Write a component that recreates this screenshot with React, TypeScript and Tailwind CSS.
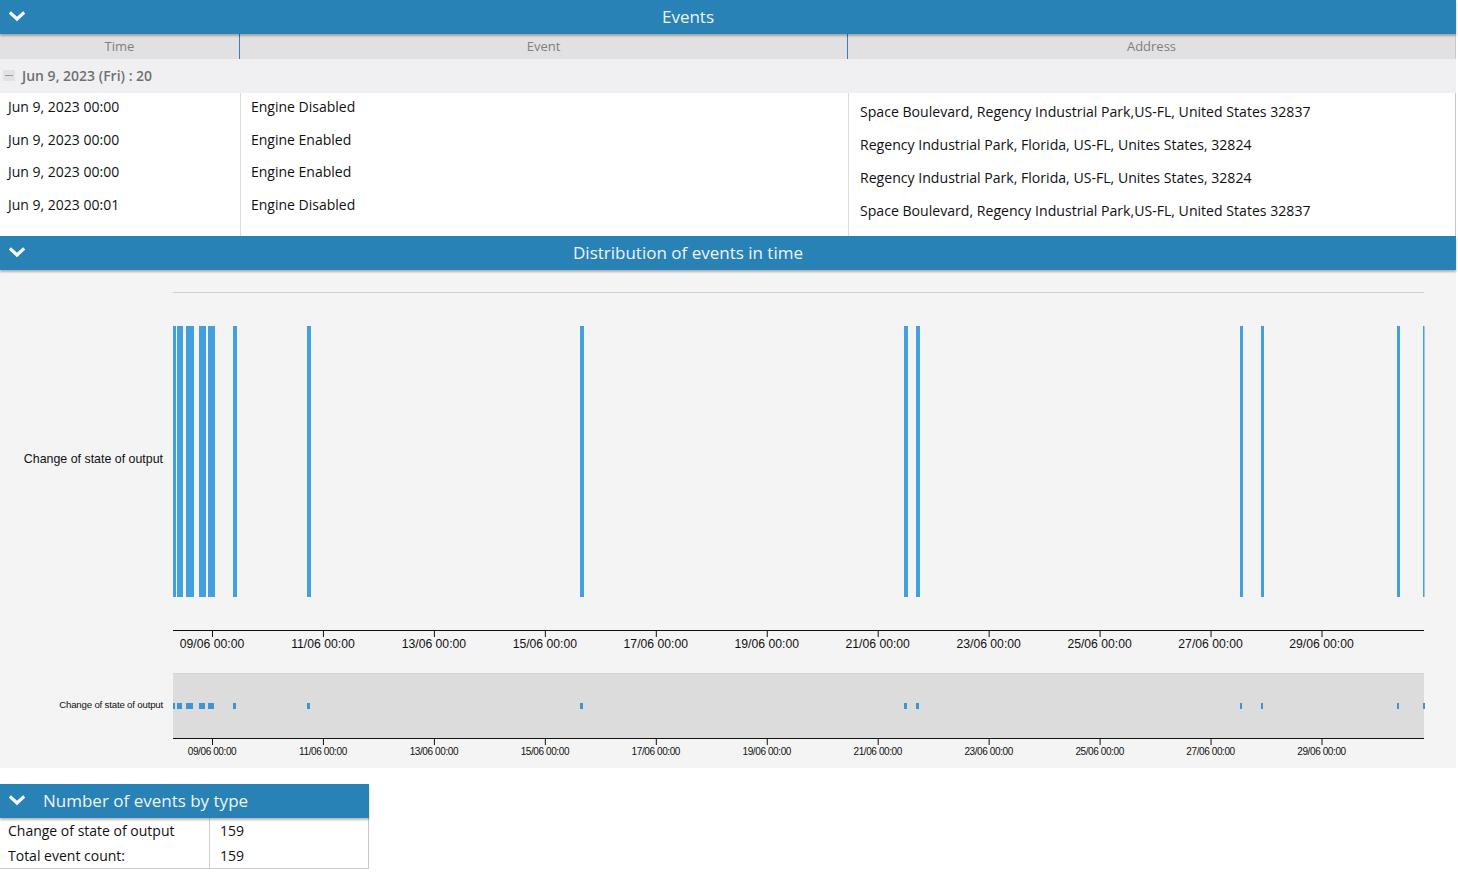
import React from "react";

const BLUE = "#2882b6";

const rows = [
  { time: "Jun 9, 2023 00:00", event: "Engine Disabled", address: "Space Boulevard, Regency Industrial Park,US-FL, United States 32837" },
  { time: "Jun 9, 2023 00:00", event: "Engine Enabled", address: "Regency Industrial Park, Florida, US-FL, Unites States, 32824" },
  { time: "Jun 9, 2023 00:00", event: "Engine Enabled", address: "Regency Industrial Park, Florida, US-FL, Unites States, 32824" },
  { time: "Jun 9, 2023 00:01", event: "Engine Disabled", address: "Space Boulevard, Regency Industrial Park,US-FL, United States 32837" },
];

// [x, width] of event bars in page coords
const bars: [number, number][] = [
  [173, 3], [177, 6], [186, 8], [199, 7], [208, 7], [233, 4], [307, 4],
  [580, 4], [904, 4], [916, 4], [1240, 3], [1261, 3], [1397, 3], [1423, 1.5],
];

const ticks = ["09/06", "11/06", "13/06", "15/06", "17/06", "19/06", "21/06", "23/06", "25/06", "27/06", "29/06"];

const Chevron = () => (
  <svg width="16" height="11" viewBox="0 0 16 11" className="shrink-0">
    <path d="M2 2.5 L8 8 L14 2.5" fill="none" stroke="white" strokeWidth="3.2" strokeLinecap="square" />
  </svg>
);

const PanelHeader = ({ title, centered = true }: { title: string; centered?: boolean }) => (
  <div
    className="relative z-10 flex h-[34px] items-center bg-[#2882b6] shadow-[0_2px_2px_rgba(0,0,0,0.28)]"
    style={{ backgroundColor: BLUE }}
  >
    <div className="absolute left-[9px] top-[11px]">
      <Chevron />
    </div>
    <div
      className={
        centered
          ? "w-full pr-[80px] text-center text-[17px] text-[#eef4f8]"
          : "pl-[43px] text-[17px] text-[#eef4f8]"
      }
    >
      {title}
    </div>
  </div>
);

const EventsTable = () => (
  <div className="w-[1456px] bg-white">
    <PanelHeader title="Events" />
    <div className="-mt-px flex h-[26px] bg-[#e1e1e4] pt-px text-[13px] font-medium text-[#7f7f7f]">
      <div className="flex w-[240px] items-center justify-center border-r border-[#3f7fae]">Time</div>
      <div className="flex w-[608px] items-center justify-center border-r border-[#3f7fae]">Event</div>
      <div className="flex flex-1 items-center justify-center border-r border-[#c8c8c8]">Address</div>
    </div>
    <div className="flex h-[34px] items-center bg-[#f0f0f2] pb-[2px]">
      <div className="ml-[3px] mr-[7px] flex h-[11px] w-[12px] items-center justify-center bg-[#e2e2e4]">
        <div className="h-px w-[8px] bg-[#9a9a9a]" />
      </div>
      <span className="text-[14px] font-semibold text-[#707070]">Jun 9, 2023 (Fri) : 20</span>
    </div>
    <div className="flex h-[143px] text-[14px] text-[#111]">
      <div className="w-[241px] border-r border-[#dcdcdc]">
        {rows.map((r, i) => (
          <div key={i} className="h-[32.7px] pl-[8px] pt-[5px] leading-[18px]">{r.time}</div>
        ))}
      </div>
      <div className="w-[608px] border-r border-[#dcdcdc]">
        {rows.map((r, i) => (
          <div key={i} className="h-[32.7px] pl-[10px] pt-[5px] leading-[18px]">{r.event}</div>
        ))}
      </div>
      <div className="flex-1 overflow-hidden border-r border-[#c8c8c8] pt-[1px] text-[14.1px]">
        {rows.map((r, i) => (
          <div key={i} className="h-[33px] pl-[11px] pt-[9px] leading-[18px]">{r.address}</div>
        ))}
      </div>
    </div>
  </div>
);

const Chart = () => {
  const tickX = (i: number) => 212 + i * 110.95;
  return (
    <svg width="1456" height="498" className="block" style={{ fontFamily: "'Liberation Sans', Arial, sans-serif" }}>
      <line x1="173" x2="1424" y1="22.5" y2="22.5" stroke="#d0d0d0" strokeWidth="1" />
      {bars.map(([x, w], i) => (
        <rect key={i} x={x} y={56} width={w} height={271} fill="#42a0de" />
      ))}
      <text x="163" y="193" textAnchor="end" fontSize="12.4" fill="#111">Change of state of output</text>
      <line x1="173" x2="1424" y1="360.5" y2="360.5" stroke="#111" strokeWidth="1" />
      {ticks.map((t, i) => (
        <g key={t}>
          <line x1={tickX(i) + 0.5} x2={tickX(i) + 0.5} y1="360" y2="367" stroke="#111" strokeWidth="1" />
          <text x={tickX(i)} y="378" textAnchor="middle" fontSize="12.2" fill="#111">
            {t} 00:00
          </text>
        </g>
      ))}
      <rect x="173" y="403" width="1251" height="65" fill="#dcdcdc" />
      <line x1="173" x2="1424" y1="403.5" y2="403.5" stroke="#d2d2d2" strokeWidth="1" />
      {bars.map(([x, w], i) => (
        <rect key={i} x={x} y={433} width={Math.max(w - 1, 2)} height={6} fill="#3e95d4" />
      ))}
      <text x="163" y="438" textAnchor="end" fontSize="9.7" fill="#111" letterSpacing="-0.2">Change of state of output</text>
      <line x1="173" x2="1424" y1="468.5" y2="468.5" stroke="#111" strokeWidth="1" />
      {ticks.map((t, i) => (
        <g key={t}>
          <line x1={tickX(i) + 0.5} x2={tickX(i) + 0.5} y1="468" y2="475" stroke="#111" strokeWidth="1" />
          <text x={tickX(i)} y="485" textAnchor="middle" fontSize="10" fill="#111" letterSpacing="-0.4">
            {t} 00:00
          </text>
        </g>
      ))}
    </svg>
  );
};

const Distribution = () => (
  <div className="w-[1456px]">
    <PanelHeader title="Distribution of events in time" />
    <div className="bg-[#f4f4f4]">
      <Chart />
    </div>
  </div>
);

const CountByType = () => (
  <div className="mt-[16px] w-[369px]">
    <PanelHeader title="Number of events by type" centered={false} />
    <div className="border-b border-r border-[#c8c8c8] text-[14px] text-[#111]">
      <div className="flex h-[25px] items-center">
        <div className="flex h-full w-[210px] items-center border-r border-[#d0d0d0] pl-[8px]">Change of state of output</div>
        <div className="pl-[10px]">159</div>
      </div>
      <div className="flex h-[25px] items-center">
        <div className="flex h-full w-[210px] items-center border-r border-[#d0d0d0] pl-[8px]">Total event count:</div>
        <div className="pl-[10px]">159</div>
      </div>
    </div>
  </div>
);

export default function App() {
  return (
    <div className="min-h-[874px] w-[1458px] bg-white" style={{ fontFamily: "'Open Sans', 'Noto Sans', sans-serif" }}>
      <EventsTable />
      <Distribution />
      <CountByType />
    </div>
  );
}
